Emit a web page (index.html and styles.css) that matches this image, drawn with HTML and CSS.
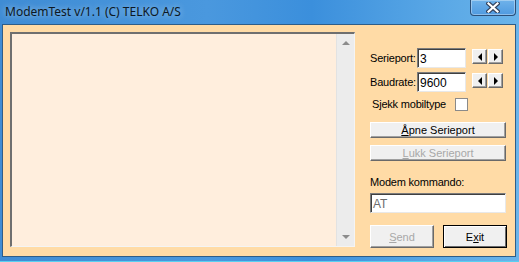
FILE: index.html
```html
<!DOCTYPE html>
<html>
<head>
  <title>ModemTest</title>
  <link rel="stylesheet" href="styles.css">
</head>
<body>
  <div class="window">
    <div class="titlebar">
      <span class="title">ModemTest v/1.1 (C) TELKO A/S</span>
      <div class="close-btn">
        <svg width="14" height="11" viewBox="0 0 14 11">
          <path d="M2.5 1.5 L11.5 9.5 M11.5 1.5 L2.5 9.5" stroke="#33435e" stroke-width="4.5" stroke-linecap="square"/>
          <path d="M2.5 1.5 L11.5 9.5 M11.5 1.5 L2.5 9.5" stroke="#ffffff" stroke-width="2.2" stroke-linecap="square"/>
        </svg>
      </div>
    </div>

    <div class="client">
      <div class="memo">
        <div class="memo-text"></div>
        <div class="scrollbar">
          <span class="arrow up"></span>
          <span class="arrow down"></span>
        </div>
      </div>

      <div class="panel">
        <div class="row">
          <label class="lbl">Serieport:</label>
          <div class="edit">3</div>
          <div class="spin">
            <span class="spin-btn"><i class="tri left"></i></span>
            <span class="spin-btn"><i class="tri right"></i></span>
          </div>
        </div>
        <div class="row row2">
          <label class="lbl">Baudrate:</label>
          <div class="edit">9600</div>
          <div class="spin">
            <span class="spin-btn"><i class="tri left"></i></span>
            <span class="spin-btn"><i class="tri right"></i></span>
          </div>
        </div>
        <div class="check-row">
          <span>Sjekk mobiltype</span>
          <span class="checkbox"></span>
        </div>

        <button class="btn wide open"><u>Å</u>pne Serieport</button>
        <button class="btn wide close-port" disabled><u>L</u>ukk Serieport</button>

        <div class="cmd-label">Modem kommando:</div>
        <div class="edit cmd">AT</div>

        <div class="btn-row">
          <button class="btn send" disabled><u>S</u>end</button>
          <button class="btn exit">E<u>x</u>it</button>
        </div>
      </div>
    </div>
  </div>
</body>
</html>
```

FILE: styles.css
```css
body {
  margin: 0;
  font-family: "Liberation Sans", Arial, sans-serif;
  font-size: 11px;
}

.window {
  width: 519px;
  height: 262px;
  box-sizing: border-box;
  padding: 0 3px 4px 2px;
  background: linear-gradient(90deg, #3f8cd4 0%, #4a98de 40%, #3b8fdc 60%, #5aa8e6 85%, #6ab4ea 100%);
  display: flex;
  flex-direction: column;
  border-bottom: 1px solid #5ad0f0;
}

.titlebar {
  height: 24px;
  display: flex;
  align-items: flex-start;
  justify-content: space-between;
}

.title {
  font-family: "Noto Sans", "Open Sans", sans-serif;
  font-size: 12px;
  color: #0c1824;
  margin: 3px 0 0 3px;
  text-shadow: 0 0 6px rgba(255, 255, 255, 0.6);
}

.close-btn {
  width: 46px;
  height: 16px;
  box-sizing: border-box;
  border: 1px solid #2b4f78;
  border-top: none;
  border-radius: 0 0 4px 4px;
  background: linear-gradient(#6fb2ea, #4f9ae0);
  box-shadow: inset 0 0 0 1px rgba(255, 255, 255, 0.35);
  display: flex;
  align-items: center;
  justify-content: center;
}

.client {
  flex: 1;
  background: #ffdba6;
  border: 1px solid #2e5d88;
  display: flex;
  padding: 7px 0 0 7px;
}

.memo {
  width: 345px;
  height: 215px;
  box-sizing: border-box;
  border-top: 2px solid #6f6f6f;
  border-left: 2px solid #6f6f6f;
  border-right: 1px solid #f4f4f4;
  border-bottom: 1px solid #f4f4f4;
  background: #ffeedd;
  display: flex;
}

.memo-text {
  flex: 1;
}

.scrollbar {
  width: 17px;
  background: #ececec;
  border-left: 1px solid #e2e2e2;
  position: relative;
}

.arrow {
  position: absolute;
  left: 5px;
  width: 0;
  height: 0;
  border-left: 4px solid transparent;
  border-right: 4px solid transparent;
}

.arrow.up {
  top: 7px;
  border-bottom: 4px solid #8c8c8c;
}

.arrow.down {
  bottom: 7px;
  border-top: 4px solid #8c8c8c;
}

.panel {
  margin-left: 15px;
  width: 137px;
  display: flex;
  flex-direction: column;
  padding-top: 16px;
  letter-spacing: -0.2px;
}

.row {
  display: flex;
  align-items: flex-start;
  height: 20px;
}

.row2 {
  margin-top: 4px;
}

.lbl {
  width: 47px;
  padding-top: 4px;
  color: #000;
}

.edit {
  box-sizing: border-box;
  width: 49px;
  height: 20px;
  background: #fff;
  border-top: 1px solid #7c7c7c;
  border-left: 1px solid #7c7c7c;
  border-right: 1px solid #e8e8e8;
  border-bottom: 1px solid #e8e8e8;
  box-shadow: inset 1px 1px 0 #404040;
  font-size: 12px;
  letter-spacing: 0;
  padding: 3px 0 0 2px;
  color: #000;
}

.spin {
  display: flex;
  gap: 1px;
  margin: 1px 0 0 6px;
}

.spin-btn {
  width: 15px;
  height: 15px;
  box-sizing: border-box;
  background: #f0f0f0;
  border-top: 1px solid #fff;
  border-left: 1px solid #fff;
  border-right: 1px solid #6a6a6a;
  border-bottom: 1px solid #6a6a6a;
  box-shadow: inset -1px -1px 0 #a0a0a0;
  display: flex;
  align-items: center;
  justify-content: center;
}

.tri {
  width: 0;
  height: 0;
  border-top: 4px solid transparent;
  border-bottom: 4px solid transparent;
}

.tri.left {
  border-right: 4px solid #000;
}

.tri.right {
  border-left: 4px solid #000;
}

.check-row {
  display: flex;
  align-items: center;
  margin-top: 5px;
  padding-left: 2px;
  height: 14px;
}

.checkbox {
  width: 11px;
  height: 11px;
  margin-left: 9px;
  background: #fff;
  border: 1px solid #8a8a8a;
}

.btn {
  font-family: "Liberation Sans", Arial, sans-serif;
  font-size: 11px;
  background: #f0f0f0;
  color: #000;
  box-sizing: border-box;
  border-top: 1px solid #fff;
  border-left: 1px solid #fff;
  border-right: 1px solid #696969;
  border-bottom: 1px solid #696969;
  box-shadow: inset -1px -1px 0 #a0a0a0;
  padding: 0;
  border-radius: 0;
}

.btn:disabled {
  color: #a8a8a8;
}

.wide {
  width: 136px;
  height: 16px;
}

.open {
  margin-top: 11px;
}

.close-port {
  margin-top: 7px;
}

.cmd-label {
  margin-top: 15px;
  height: 14px;
}

.edit.cmd {
  width: 136px;
  margin-top: 3px;
  color: #6d6d6d;
}

.btn-row {
  display: flex;
  justify-content: space-between;
  margin-top: 12px;
}

.send,
.exit {
  width: 64px;
  height: 23px;
}

.exit {
  border: 1px solid #000;
  box-shadow: inset 1px 1px 0 #fff, inset -1px -1px 0 #696969;
}
```
